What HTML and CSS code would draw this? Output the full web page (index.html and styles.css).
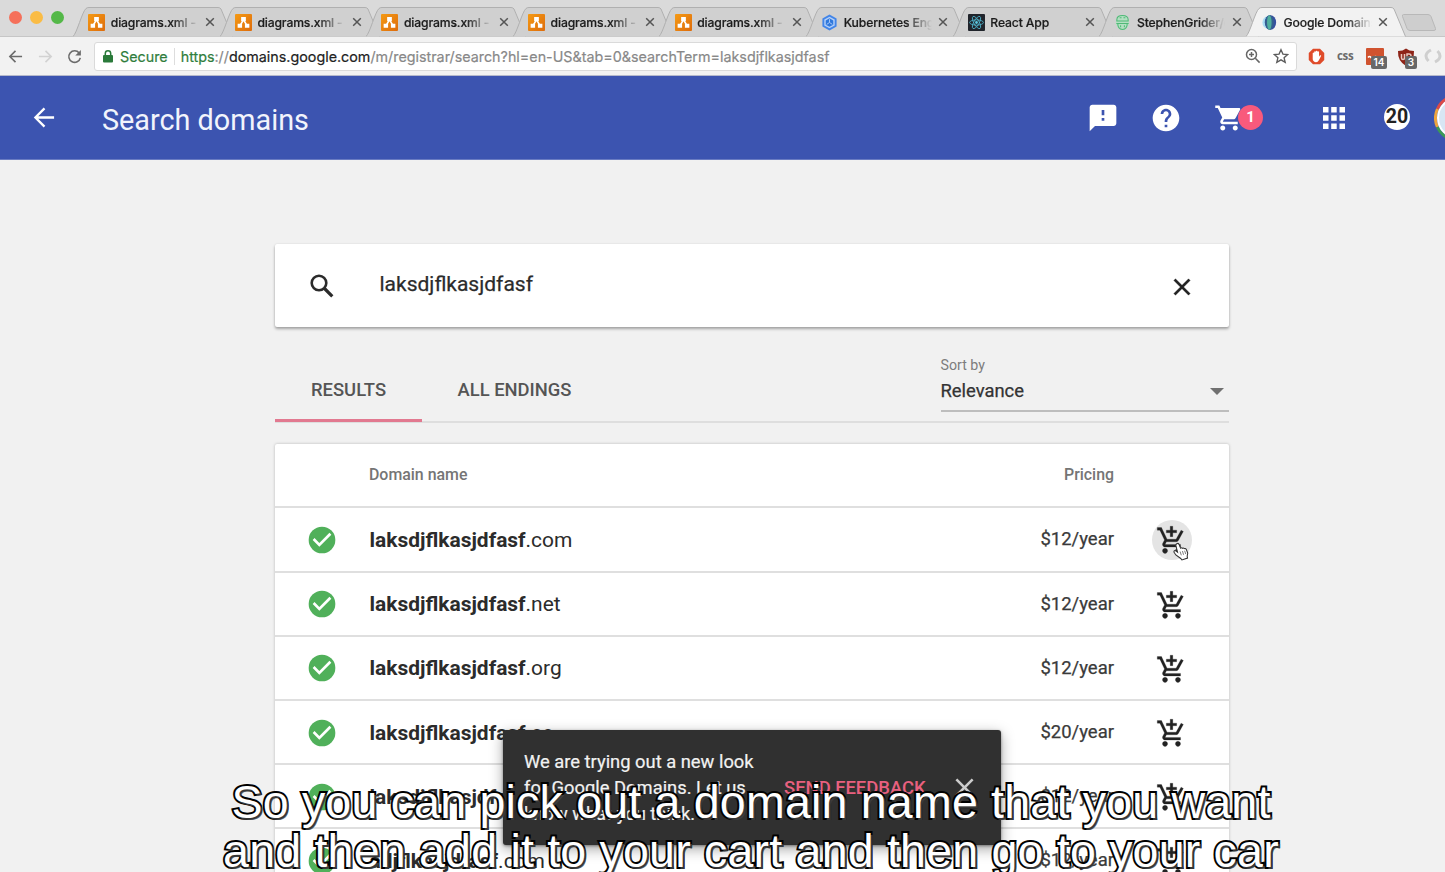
FILE: index.html
```html
<!DOCTYPE html>
<html lang="en">
<head>
<meta charset="utf-8">
<title>Google Domains</title>
<link rel="stylesheet" href="styles.css">
</head>
<body>
<svg class="defs" width="0" height="0">
  <defs>
    <linearGradient id="og" x1="0" y1="0" x2="1" y2="1"><stop offset="0" stop-color="#f59a14"/><stop offset="1" stop-color="#dd6c0c"/></linearGradient>
    <symbol id="tabshape" viewBox="0 0 160 30"><path d="M0 29.500C4 26 9 5 13 1.500Q14 .5 16 .5H145Q147 .5 148 2L159.500 29.500"/></symbol>
    <symbol id="drawio" viewBox="0 0 18 18"><rect width="18" height="18" rx="1" fill="url(#og)"/><path d="M9 6 5.500 12M9 6l3.500 6" stroke="#fff" stroke-width="1.800"/><path d="M6.500 3.200h5v4.300h-5zM2.800 10.300h4.700v4.200H2.800zM10.500 10.300h4.700v4.200h-4.700z" fill="#fff"/></symbol>
    <symbol id="x" viewBox="0 0 10 10"><path d="M1.200 1.200 8.800 8.800M8.800 1.200 1.200 8.800" fill="none" stroke="currentColor" stroke-width="1.500"/></symbol>
    <symbol id="close" viewBox="0 0 24 24"><path d="M19 6.410 17.590 5 12 10.590 6.410 5 5 6.410 10.590 12 5 17.590 6.410 19 12 13.410 17.590 19 19 17.590 13.410 12z"/></symbol>
    <symbol id="check" viewBox="0 0 24 24"><circle cx="12" cy="12" r="10" fill="#50b05a"/><path d="M10 17l-5-5 1.410-1.410L10 14.170l7.590-7.590L19 8z" fill="#fff"/></symbol>
    <symbol id="addcart" viewBox="0 0 24 24"><path d="M11 9h2V6h3V4h-3V1h-2v3H8v2h3v3zm-4 9c-1.100 0-1.990.9-1.990 2S5.900 22 7 22s2-.9 2-2-.9-2-2-2zm10 0c-1.100 0-1.990.9-1.990 2s.89 2 1.990 2 2-.9 2-2-.9-2-2-2zm-9.830-3.250.03-.12.9-1.630h7.450c.75 0 1.410-.41 1.750-1.030l3.860-7.010L19.420 4h-.01l-1.100 2-2.760 5H8.530l-.13-.27L6.160 6l-.95-2-.94-2H1v2h2l3.600 7.590-1.350 2.450c-.16.28-.25.61-.25.96 0 1.100.9 2 2 2h12v-2H7.420c-.13 0-.25-.11-.25-.25z"/></symbol>
  </defs>
</svg>

<div class="tabstrip">
  <div class="lights"><i class="red"></i><i class="yellow"></i><i class="green"></i></div>
  <div class="tab"><svg class="shape"><use href="#tabshape"/></svg><svg class="fav"><use href="#drawio"/></svg><span class="label">diagrams.xml - dr</span><svg class="tx"><use href="#x"/></svg></div>
  <div class="tab"><svg class="shape"><use href="#tabshape"/></svg><svg class="fav"><use href="#drawio"/></svg><span class="label">diagrams.xml - dr</span><svg class="tx"><use href="#x"/></svg></div>
  <div class="tab"><svg class="shape"><use href="#tabshape"/></svg><svg class="fav"><use href="#drawio"/></svg><span class="label">diagrams.xml - dr</span><svg class="tx"><use href="#x"/></svg></div>
  <div class="tab"><svg class="shape"><use href="#tabshape"/></svg><svg class="fav"><use href="#drawio"/></svg><span class="label">diagrams.xml - dr</span><svg class="tx"><use href="#x"/></svg></div>
  <div class="tab"><svg class="shape"><use href="#tabshape"/></svg><svg class="fav"><use href="#drawio"/></svg><span class="label">diagrams.xml - dr</span><svg class="tx"><use href="#x"/></svg></div>
  <div class="tab"><svg class="shape"><use href="#tabshape"/></svg><svg class="fav" viewBox="0 0 18 18"><path d="M9 .5 16.500 4.700v8.600L9 17.500 1.500 13.300V4.700z" fill="#4285e8"/><path d="M9 2.800 14.500 5.800v6.400L9 15.200 3.500 12.200V5.800z" fill="#b5d0f8"/><path d="M9 4.500 13 6.800v4.700L9 13.500 5 11.500V6.800z" fill="#2f78dc"/><path d="M9 5.500v3.500l3 2M9 9l-3 2" stroke="#a9c8f8" fill="none"/></svg><span class="label">Kubernetes Engine</span><svg class="tx"><use href="#x"/></svg></div>
  <div class="tab"><svg class="shape"><use href="#tabshape"/></svg><svg class="fav" viewBox="0 0 18 18"><rect width="18" height="18" rx="1" fill="#20242b"/><g fill="none" stroke="#4fb4cc" stroke-width=".9"><ellipse cx="9" cy="9" rx="7.300" ry="2.800"/><ellipse cx="9" cy="9" rx="7.300" ry="2.800" transform="rotate(60 9 9)"/><ellipse cx="9" cy="9" rx="7.300" ry="2.800" transform="rotate(120 9 9)"/></g><circle cx="9" cy="9" r="1.500" fill="#5cc8e0"/></svg><span class="label">React App</span><svg class="tx"><use href="#x"/></svg></div>
  <div class="tab"><svg class="shape"><use href="#tabshape"/></svg><svg class="fav" viewBox="0 0 18 18"><ellipse cx="9" cy="9" rx="7" ry="8" fill="#b4dfc2"/><g fill="none" stroke="#4fb977" stroke-width="1.100"><path d="M3 6q0-4.500 6-4.500T15 6v1.500H3zM2.500 10h13M4 10q0 6 5 6.500 5-.5 5-6.500M6 4h2M10 4h2M7 12v2M11 12v2"/></g></svg><span class="label">StephenGrider/d</span><svg class="tx"><use href="#x"/></svg></div>
  <div class="tab active"><svg class="shape"><use href="#tabshape"/></svg><svg class="fav" viewBox="0 0 18 18"><path d="M7 2Q1.500 4 1.500 9T7 16z" fill="#a8dcf4"/><ellipse cx="10" cy="9" rx="6" ry="7.800" fill="#3550a0"/><ellipse cx="9" cy="9" rx="4.600" ry="7.800" fill="#35608f"/><ellipse cx="8.800" cy="9" rx="2.400" ry="7.800" fill="#4faf9e"/></svg><span class="label">Google Domains</span><svg class="tx"><use href="#x"/></svg></div>
  <svg class="newtab" viewBox="0 0 36 20"><path d="M2.500 1.500H27Q29 1.500 30 3.500L34.500 15.500Q35 17.500 33 17.500H9Q7 17.500 6 15.500L1.500 3.500Q1 1.500 2.500 1.500Z"/></svg>
</div>

<div class="toolbar">
  <svg class="nav" viewBox="0 0 16 16"><path d="M15 8H2M8 2 2 8l6 6"/></svg>
  <svg class="nav off" viewBox="0 0 16 16"><path d="M1 8h13M8 2l6 6-6 6"/></svg>
  <svg class="nav" viewBox="0 0 16 16"><path d="M13 4.200A6.200 6.200 0 1 0 14.200 9.500"/><path d="M14.800 1v6H8.800z" fill="#6b6b6b" stroke="none"/></svg>
  <div class="urlbar">
    <svg class="lock" viewBox="0 0 10 13"><rect y="5" width="10" height="7.500" rx="1" fill="#2a7a3a"/><path d="M2.300 5.500V3.500a2.700 2.700 0 0 1 5.400 0v2" fill="none" stroke="#2a7a3a" stroke-width="1.500"/></svg>
    <span class="secure">Secure</span>
    <span class="url"><span class="https">https</span>://<span class="host">domains.google.com</span><span class="path">/m/registrar/search?hl=en-US&amp;tab=0&amp;searchTerm=laksdjflkasjdfasf</span></span>
    <svg class="mag" viewBox="0 0 16 16"><g fill="none" stroke="#666" stroke-width="1.500"><circle cx="6.500" cy="6.500" r="5"/><path d="m10.300 10.300 4.300 4.300M6.500 4v5M4 6.500h5"/></g></svg>
    <svg class="star" viewBox="0 0 24 24"><path d="m12 2.500 2.900 6.700 7.100.6-5.400 4.700 1.700 7.100L12 17.800l-6.300 3.800 1.700-7.100L2 9.800l7.100-.6z" fill="none" stroke="#5c5c5c" stroke-width="2"/></svg>
  </div>
  <div class="ext">
    <svg class="hand" viewBox="0 0 18 18"><path d="M5.300.8h7.400l4.500 4.500v7.400l-4.500 4.500H5.300L.8 12.700V5.300z" fill="#df4b2a"/><path d="M5 7.500V5.200q.8-1 1.500 0V4q.9-1.200 1.800 0v-.7q.9-1 1.700 0V4q.9-1 1.700 0v5.200l1-1.400q1-.5 1.300.4l-2.500 4.800q-1 2-3 2-3 0-3.500-3z" fill="#fff"/></svg>
    <span class="css">css</span>
    <div class="badged"><svg viewBox="0 0 18 17"><rect width="18" height="17" rx="1" fill="#d0532f"/><path d="M2 9.500q1.500-2 3 0t3 0 3 0 3 0" fill="none" stroke="#fff" stroke-width="1.500"/></svg><b class="wide">14</b></div>
    <div class="badged shield"><svg viewBox="0 0 18 18"><path d="M9 .5Q12 3 17 3 17.500 13 9 18 .5 13 1 3 6 3 9 .5z" fill="#8e2418"/><path d="M4.500 6v4q0 1.500 1.500 1.500T7.500 10V6M10 12V6h2q2 0 2 2t-2 2h-2" fill="none" stroke="#e7c5bd" stroke-width="1.500"/></svg><b>3</b></div>
    <svg class="code" viewBox="0 0 18 16"><path d="M7 2Q2 4.500 2 8q0 2.500 2.500 5M11 14q5-2.500 5-6 0-2.500-2.500-5" fill="none" stroke="#cfcfcf" stroke-width="3"/></svg>
  </div>
</div>

<header class="appbar">
  <svg class="back" viewBox="0 0 24 24"><path d="M22 12H3M12 2.500 2.500 12l9.500 9.500" fill="none" stroke="#fff" stroke-width="2.400"/></svg>
  <h1>Search domains</h1>
  <svg class="fb" viewBox="0 0 24 24"><path d="M20 2H4c-1.100 0-2 .9-2 2v18l4-4h14c1.100 0 2-.9 2-2V4c0-1.100-.9-2-2-2zm-7 12h-2v-2h2v2zm0-4h-2V6h2v4z"/></svg>
  <svg class="help" viewBox="0 0 24 24"><path d="M12 2C6.480 2 2 6.480 2 12s4.480 10 10 10 10-4.480 10-10S17.520 2 12 2zm1 17h-2v-2h2v2zm2.070-7.750-.9.920C13.450 12.900 13 13.500 13 15h-2v-.5c0-1.100.45-2.100 1.170-2.830l1.240-1.260c.37-.36.59-.86.59-1.410 0-1.100-.9-2-2-2s-2 .9-2 2H8c0-2.210 1.790-4 4-4s4 1.790 4 4c0 .88-.36 1.680-.93 2.250z"/></svg>
  <svg class="cart" viewBox="0 0 24 24"><path d="M7 18c-1.100 0-1.990.9-1.990 2S5.900 22 7 22s2-.9 2-2-.9-2-2-2zM1 2v2h2l3.600 7.590-1.350 2.450c-.16.28-.25.61-.25.96 0 1.100.9 2 2 2h12v-2H7.420c-.14 0-.25-.11-.25-.25l.03-.12.9-1.630h7.450c.75 0 1.410-.41 1.750-1.030l3.580-6.490c.08-.14.12-.31.12-.48 0-.55-.45-1-1-1H5.210l-.94-2H1zm16 16c-1.100 0-1.990.9-1.990 2s.89 2 1.990 2 2-.9 2-2-.9-2-2-2z"/></svg>
  <span class="count">1</span>
  <svg class="apps" viewBox="0 0 22 22"><path d="M0 0h5.500v5.500H0zM8.200 0h5.500v5.500H8.200zM16.500 0H22v5.500h-5.500zM0 8.200h5.500v5.500H0zM8.200 8.200h5.500v5.500H8.200zM16.500 8.200H22v5.500h-5.500zM0 16.500h5.500V22H0zM8.200 16.500h5.500V22H8.200zM16.500 16.500H22V22h-5.500z"/></svg>
  <span class="twenty">20</span>
  <svg class="avatar" viewBox="0 0 48 48"><g fill="none" stroke-width="3"><path d="M3.400 15A22.500 22.500 0 0 1 24 1.500" stroke="#dc4a48"/><path d="M3.400 33a22.500 22.500 0 0 1 0-18" stroke="#eda43e"/><path d="M24 46.500A22.500 22.500 0 0 1 3.400 33" stroke="#3d9a55"/></g><circle cx="24" cy="24" r="20" fill="#d8e6f4" stroke="#fff" stroke-width="2"/></svg>
</header>

<main>
  <div class="search">
    <svg class="glass" viewBox="0 0 24 24"><circle cx="9" cy="9" r="7.300" fill="none" stroke="#2b2b2b" stroke-width="2.600"/><path d="m14 14 8.300 8.300" stroke="#2b2b2b" stroke-width="3.200"/></svg>
    <span class="query">laksdjflkasjdfasf</span>
    <svg class="clear"><use href="#close"/></svg>
  </div>
  <div class="tabs">
    <div class="ptab on"><span>RESULTS</span></div>
    <div class="ptab all"><span>ALL ENDINGS</span></div>
    <div class="sort"><small>Sort by</small><div class="select"><span>Relevance</span><i></i></div></div>
  </div>
  <div class="table">
    <div class="thead"><span>Domain name</span><span class="pr">Pricing</span></div>
    <div class="row"><svg class="ok"><use href="#check"/></svg><span class="name"><b>laksdjflkasjdfasf</b>.com</span><span class="price">$12/year</span><div class="add hover"><svg><use href="#addcart"/></svg>
      <svg class="cursor" viewBox="0 0 18 19"><path d="M4 1.200Q5.600.4 6.400 2L8 6q1-1 2 .1 1-.8 2 .4 1.300-.7 2 .6l1.600 4-.6 3.400.4 2-6 2-1.200-1.600L3 13.200.9 10Q1.200 8 3 8.800l1.800 1.400L3 3Q3 1.700 4 1.200z" fill="#fff" stroke="#333" stroke-width="1.100"/><path d="M7.500 9.500l1.300 4M10 9l1.200 4M12.300 8.700l1.200 3.500" stroke="#555" stroke-width=".8"/></svg></div></div>
    <div class="row"><svg class="ok"><use href="#check"/></svg><span class="name"><b>laksdjflkasjdfasf</b>.net</span><span class="price">$12/year</span><div class="add"><svg><use href="#addcart"/></svg></div></div>
    <div class="row"><svg class="ok"><use href="#check"/></svg><span class="name"><b>laksdjflkasjdfasf</b>.org</span><span class="price">$12/year</span><div class="add"><svg><use href="#addcart"/></svg></div></div>
    <div class="row"><svg class="ok"><use href="#check"/></svg><span class="name"><b>laksdjflkasjdfasf</b>.co</span><span class="price">$20/year</span><div class="add"><svg><use href="#addcart"/></svg></div></div>
    <div class="row"><svg class="ok"><use href="#check"/></svg><span class="name"><b>laksdjflkasjdfasf</b>.io</span><span class="price">$12/year</span><div class="add"><svg><use href="#addcart"/></svg></div></div>
    <div class="row"><svg class="ok"><use href="#check"/></svg><span class="name"><b>adjflkasjdfasf</b>.com</span><span class="price">$12/year</span><div class="add"><svg><use href="#addcart"/></svg></div></div>
  </div>
</main>

<div class="snackbar">
  <p>We are trying out a new look<br>for Google Domains. Let us<br>know what you think.</p>
  <span class="send">SEND FEEDBACK</span>
  <svg class="dismiss"><use href="#close"/></svg>
</div>

<div class="caption"><div class="l1">So you can pick out a domain name that you want</div><div class="l2">and then add it to your cart and then go to your car</div></div>
</body>
</html>
```
FILE: styles.css
```css
* { box-sizing: border-box; }
html, body { height: 872px; overflow: hidden; }
body { margin: 0; position: relative; background: #f1f1f1; font-family: Roboto, sans-serif; color: #2b2b2b; }
svg { display: block; flex: none; }
.defs { position: absolute; }

.tabstrip { height: 37px; display: flex; align-items: flex-end; background: #dadada; border-bottom: 1px solid #c6c6c6; }
.lights { width: 73px; height: 36px; display: flex; gap: 8px; padding: 11px 0 0 9px; flex: none; }
.lights i { width: 13px; height: 13px; border-radius: 50%; }
.red { background: #f5705a; }
.yellow { background: #fabc45; }
.green { background: #54b848; }
.tab { position: relative; width: 146.600px; height: 30px; flex: none; display: flex; align-items: center; padding-left: 16px; margin-bottom: -1px; font-family: Inter, sans-serif; }
.tab .shape { position: absolute; left: 0; top: 0; width: 160px; height: 30px; fill: #d0d0d0; stroke: #b0b0b0; stroke-width: 1; }
.tab.active .shape { fill: #f2f2f2; }
.tab.active { z-index: 1; }
.fav { position: relative; width: 17px; height: 17px; margin-left: -.8px; }
.label { position: relative; width: 88px; margin-left: 5.600px; overflow: hidden; white-space: nowrap; font-size: 12.200px; font-weight: 500; letter-spacing: -.15px; color: #1c1c1c; -webkit-text-stroke: .2px #1c1c1c; -webkit-mask-image: linear-gradient(90deg, #000 70%, transparent 100%); }
.tx { position: relative; width: 10px; height: 10px; margin-left: 6.700px; color: #555; }
.newtab { width: 36px; height: 20px; margin: 0 0 3px 9px; fill: #cecece; stroke: #b8b8b8; }

.toolbar { height: 39px; display: flex; align-items: center; background: #f2f2f2; border-bottom: 1px solid #b5b9cc; padding-left: 8px; overflow: hidden; }
.nav { width: 15px; height: 15px; margin-right: 14.500px; fill: none; stroke: #6b6b6b; stroke-width: 1.700; }
.nav.off { stroke: #d2d2d2; }
.nav + .urlbar { margin-left: -2.500px; }
.urlbar { width: 1203px; height: 29px; flex: none; display: flex; align-items: center; background: #fff; border: 1px solid #dadada; border-radius: 3px; padding: 0 7px 0 8px; font-family: Inter, sans-serif; font-size: 14.320px; }
.lock { width: 10px; height: 13px; }
.secure { color: #2f7d3c; margin-left: 7px; padding-right: 6px; border-right: 1px solid #ddd; -webkit-text-stroke: .2px; }
.url { margin-left: 6px; color: #888; white-space: nowrap; -webkit-text-stroke: .2px; }
.https { color: #2f7d3c; }
.host { color: #222; }
.mag { width: 16px; height: 16px; margin-left: auto; }
.star { width: 16px; height: 16px; margin-left: 12px; }
.ext { display: flex; align-items: center; margin-left: 11px; flex: none; }
.hand { width: 17px; height: 17px; }
.css { width: 16px; margin-left: 12px; font: 700 11.500px/14px "Open Sans", sans-serif; color: #6a6a6a; letter-spacing: -.3px; }
.badged { position: relative; width: 18px; height: 17px; margin-left: 13px; }
.badged b { position: absolute; left: 14px; margin-left: -6px; top: 8px; height: 13px; width: 12px; background: #686868; border-radius: 2px; color: #fff; font: 600 10px/13px Inter, sans-serif; text-align: center; }
.badged b.wide { left: 11px; width: 16px; }
.code { width: 18px; height: 16px; margin-left: 9px; }

.appbar { height: 84px; display: flex; align-items: center; background: #3c54b0; fill: #fff; border-bottom: 1px solid #6a7cc2; overflow: hidden; padding-left: 33px; }
.back { width: 23px; height: 23px; }
h1 { width: 987px; flex: none; margin: 4px 0 0 46px; font-size: 28.800px; font-weight: 400; line-height: 34px; color: #f2f4fc; white-space: nowrap; }
.fb, .help { width: 32px; height: 32px; }
.fb { margin-left: -2px; }
.help { margin-left: 31px; }
.cart { width: 30px; height: 32px; margin-left: 32px; }
.count { position: relative; width: 25px; height: 25px; flex: none; margin-left: -6px; border-radius: 50%; background: #f85a7c; color: #fff; font-size: 15px; font-weight: 700; line-height: 25px; text-align: center; }
.apps { width: 22px; height: 22px; margin-left: 60px; }
.twenty { width: 26px; height: 26px; flex: none; margin: -1px 0 0 39px; border-radius: 50%; background: #fff; color: #222; font-size: 19.500px; font-weight: 700; line-height: 26px; text-align: center; }
.avatar { width: 48px; height: 48px; margin-left: 24px; }

main { width: 954px; margin: 84px 0 0 275px; }
.search { height: 83px; display: flex; align-items: center; background: #fff; border-radius: 2px; box-shadow: 0 2px 3px rgba(0,0,0,.32), 0 0 2px rgba(0,0,0,.1); padding: 1px 33.500px 0 35px; }
.glass { width: 24px; height: 24px; }
.query { flex: 1; margin: -4px 0 0 45.500px; font-size: 21px; -webkit-text-stroke: .25px; }
.clear { width: 28px; height: 28px; margin-top: 1px; fill: #222; stroke: #222; stroke-width: .3px; }
.tabs { height: 96px; display: flex; border-bottom: 2px solid #dedede; color: #555; font-size: 18.400px; font-weight: 500; }
.ptab { padding: 52.400px 36px 0; height: 95px; line-height: 22px; white-space: nowrap; }
.ptab.on { width: 146.500px; border-bottom: 3px solid #e27990; }
.sort { width: 288.500px; height: 84.500px; margin-left: auto; border-bottom: 2px solid #bdbdbd; padding-top: 29.400px; font-weight: 400; }
.sort small { display: block; font-size: 14.200px; line-height: 18px; color: #7d7d7d; }
.select { display: flex; align-items: center; justify-content: space-between; padding: 6px 5px 0 0; line-height: 22px; color: #333; font-size: 18.400px; -webkit-text-stroke: .25px; }
.select i { border: 7px solid transparent; border-top-color: #707070; border-bottom: 0; }

.table { margin-top: 21px; background: #fff; border-radius: 2px; box-shadow: 0 0 3px rgba(0,0,0,.25); }
.thead { height: 64.400px; display: flex; justify-content: space-between; align-items: center; padding: 0 115px 1px 94px; border-bottom: 2px solid #dfdfdf; color: #757575; font-size: 15.900px; font-weight: 500; }
.row { height: 64.200px; display: flex; align-items: center; padding: 1px 37px 0 31px; border-bottom: 2px solid #dfdfdf; }
.ok { width: 32px; height: 32px; }
.name { margin-left: 31.500px; font-size: 20.950px; white-space: nowrap; }
.name b { font-weight: 700; }
.price { margin: -1px 38px 0 auto; font-size: 18.500px; color: #3a3a3a; -webkit-text-stroke: .25px; }
.add { position: relative; width: 40px; height: 40px; border-radius: 50%; display: flex; align-items: center; justify-content: center; fill: #222; }
.add > svg:first-child { width: 31px; height: 31px; margin: 2px 0 0 -2px; stroke: #222; stroke-width: .2px; }
.add.hover { background: #e4e4e4; }
.cursor { position: absolute; left: 21px; top: 22px; width: 17px; height: 19px; }

.snackbar { position: absolute; left: 503px; top: 730px; width: 498px; height: 115px; display: flex; align-items: center; background: #303030; border-radius: 3px; box-shadow: 0 4px 14px rgba(0,0,0,.35), 0 1px 3px rgba(0,0,0,.4); padding: 0 23px 0 21px; }
.snackbar p { width: 260px; margin: 0; font-size: 18.350px; line-height: 26px; color: #f2f2f2; white-space: nowrap; -webkit-text-stroke: .2px; }
.send { color: #e8607f; font-size: 18.450px; font-weight: 500; white-space: nowrap; }
.dismiss { width: 31px; height: 31px; margin-left: auto; margin-right: -2px; fill: #ccc; }

.caption { position: absolute; left: 0; top: 778px; width: 1502px; height: 94px; overflow: hidden; text-align: center; font: 46.500px/49px "Liberation Sans", sans-serif; letter-spacing: .22px; color: #fff; white-space: nowrap; -webkit-text-stroke: 4px #000; paint-order: stroke fill; text-shadow: 2px 2px 0 rgba(70,70,70,.8); }
```
